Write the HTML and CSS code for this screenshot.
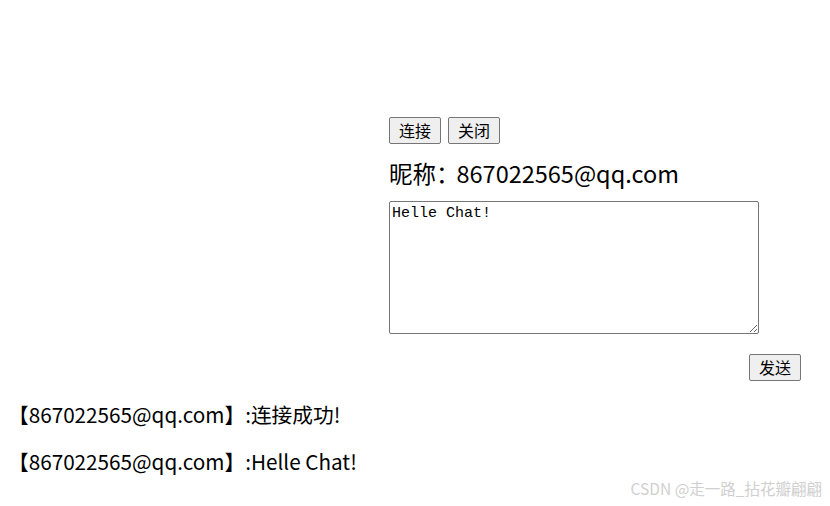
FILE: index.html
```html
<!DOCTYPE html>
<html>
<head>
<meta charset="utf-8">
<link rel="stylesheet" href="styles.css">
</head>
<body>
<div class="panel">
  <div class="controls">
    <button class="btn">连接</button>
    <button class="btn">关闭</button>
  </div>
  <div class="nick">昵称<span class="colon">：</span>867022565@qq.com</div>
  <textarea class="input">Helle Chat!</textarea>
  <div class="send-row"><button class="btn">发送</button></div>
</div>
<div class="messages">
  <p class="msg">【867022565@qq.com】:连接成功!</p>
  <p class="msg">【867022565@qq.com】:Helle Chat!</p>
</div>
<div class="watermark">CSDN @走一路_拈花瓣翩翩</div>
</body>
</html>
```
FILE: styles.css
```css
html, body {
  margin: 0;
  padding: 0;
  background: #fff;
}
body {
  width: 830px;
  height: 506px;
  position: relative;
  overflow: hidden;
  font-family: "Noto Sans CJK SC", "Noto Sans", sans-serif;
  color: #000;
}
.panel {
  margin-left: 389px;
  width: 412px;
  padding-top: 117px;
  display: flex;
  flex-direction: column;
}
.controls {
  display: flex;
  gap: 7px;
}
.btn {
  font-family: "Noto Sans CJK SC", sans-serif;
  font-size: 16px;
  line-height: 19px;
  height: 27px;
  width: 52px;
  padding: 0;
  background: #efefef;
  border: 1px solid #767676;
  border-radius: 2px;
  color: #000;
}
.nick {
  font-size: 23.5px;
  line-height: 30px;
  margin-top: 14px;
  height: 30px;
}
.colon {
  letter-spacing: -3px;
}
.input {
  margin-top: 13px;
  width: 370px;
  height: 133px;
  box-sizing: border-box;
  border: 1px solid #767676;
  border-radius: 2px;
  padding: 3px 2px;
  font-family: "Liberation Mono", monospace;
  font-size: 15px;
  line-height: 17px;
  resize: both;
}
.send-row {
  display: flex;
  justify-content: flex-end;
  margin-top: 20px;
}
.messages {
  padding-left: 8px;
  margin-top: 19px;
}
.msg {
  margin: 0 0 19px;
  font-size: 20.7px;
  line-height: 28px;
}
.watermark {
  position: absolute;
  right: 8px;
  bottom: 7px;
  font-size: 15.5px;
  color: #d0d0d0;
}
```
